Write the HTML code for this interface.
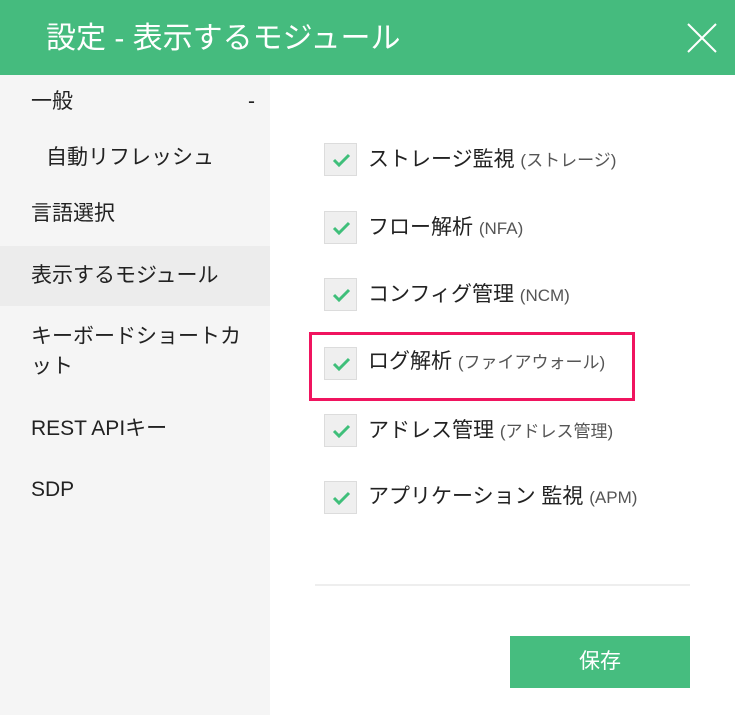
<!DOCTYPE html>
<html><head><meta charset="utf-8"><style>
*{margin:0;padding:0;box-sizing:border-box}
body{width:735px;height:715px;position:relative;background:#fff;font-family:"Liberation Sans","Noto Sans CJK JP",sans-serif;color:#222;overflow:hidden}
.hd{position:absolute;left:0;top:0;width:735px;height:75px;background:#45bb7e}
.title{position:absolute;left:46px;top:19px;font-size:30px;color:#fff;line-height:40px;white-space:nowrap}
.side{position:absolute;left:0;top:75px;width:270px;height:640px;background:#f5f5f5}
.act{position:absolute;left:0;top:246px;width:270px;height:60px;background:#ececec}
.t{position:absolute;font-size:21px;line-height:30px;white-space:nowrap}
.cb{position:absolute;left:324px;width:33px;height:33px;background:#efefef;border:1px solid #dcdcdc}
.cb svg{position:absolute;left:7px;top:8px}
.lb{position:absolute;left:368px;font-size:21px;line-height:30px;white-space:nowrap}
.lb small{font-size:17px;color:#555}
.red{position:absolute;left:309px;top:332px;width:326px;height:69px;border:3px solid #f0145f}
.div{position:absolute;left:315px;top:584px;width:375px;height:2px;background:#eee}
.btn{position:absolute;left:510px;top:636px;width:180px;height:52px;background:#46bd7f;color:#fff;font-size:21px;text-align:center;line-height:52px}
</style></head><body>
<div class="hd"><div class="title">設定 - 表示するモジュール</div>
<svg style="position:absolute;left:687px;top:23px" width="30" height="30"><path d="M1 1L29 29M29 1L1 29" stroke="#fff" stroke-width="2"/></svg></div>
<div class="side"></div><div class="act"></div>
<div class="t" style="left:31px;top:87px">一般</div>
<div class="t" style="left:248px;top:87px">-</div>
<div class="t" style="left:46px;top:143px">自動リフレッシュ</div>
<div class="t" style="left:31px;top:199px">言語選択</div>
<div class="t" style="left:31px;top:261px">表示するモジュール</div>
<div class="t" style="left:31px;top:322px">キーボードショートカ</div>
<div class="t" style="left:31px;top:352px">ット</div>
<div class="t" style="left:31px;top:414px">REST APIキー</div>
<div class="t" style="left:31px;top:475px">SDP</div>

<div class="cb" style="top:143px"><svg width="19" height="16"><path d="M2 8L7 13L17 3" stroke="#3fbf7a" stroke-width="3" fill="none"/></svg></div>
<div class="lb" style="top:145px">ストレージ監視 <small>(ストレージ)</small></div>
<div class="cb" style="top:211px"><svg width="19" height="16"><path d="M2 8L7 13L17 3" stroke="#3fbf7a" stroke-width="3" fill="none"/></svg></div>
<div class="lb" style="top:213px">フロー解析 <small>(NFA)</small></div>
<div class="cb" style="top:278px"><svg width="19" height="16"><path d="M2 8L7 13L17 3" stroke="#3fbf7a" stroke-width="3" fill="none"/></svg></div>
<div class="lb" style="top:280px">コンフィグ管理 <small>(NCM)</small></div>
<div class="red"></div>
<div class="cb" style="top:347px"><svg width="19" height="16"><path d="M2 8L7 13L17 3" stroke="#3fbf7a" stroke-width="3" fill="none"/></svg></div>
<div class="lb" style="top:347px">ログ解析 <small>(ファイアウォール)</small></div>
<div class="cb" style="top:414px"><svg width="19" height="16"><path d="M2 8L7 13L17 3" stroke="#3fbf7a" stroke-width="3" fill="none"/></svg></div>
<div class="lb" style="top:416px">アドレス管理 <small>(アドレス管理)</small></div>
<div class="cb" style="top:481px"><svg width="19" height="16"><path d="M2 8L7 13L17 3" stroke="#3fbf7a" stroke-width="3" fill="none"/></svg></div>
<div class="lb" style="top:482px">アプリケーション 監視 <small>(APM)</small></div>
<div class="div"></div>
<div class="btn">保存</div>
</body></html>
